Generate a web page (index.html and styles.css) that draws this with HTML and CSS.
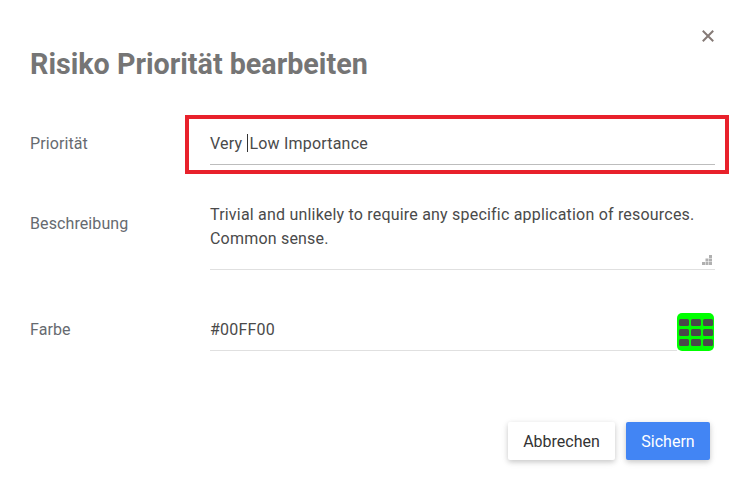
FILE: index.html
```html
<!DOCTYPE html>
<html lang="de">
<head>
<meta charset="utf-8">
<title>Risiko Priorität bearbeiten</title>
<link rel="stylesheet" href="styles.css">
</head>
<body>
<div class="dialog">
  <button class="close" aria-label="Schließen">
    <svg width="12" height="12" viewBox="0 0 12 12"><path d="M1.5 1.5L10.5 10.5M10.5 1.5L1.5 10.5" stroke="#857a76" stroke-width="2" stroke-linecap="square"/></svg>
  </button>
  <h1 class="title">Risiko Priorität bearbeiten</h1>

  <div class="row row-name">
    <div class="label">Priorität</div>
    <div class="field highlighted">
      <div class="input">Very <span class="caret"></span>Low Importance</div>
    </div>
  </div>

  <div class="row row-desc">
    <div class="label label-desc">Beschreibung</div>
    <div class="field">
      <div class="input textarea">Trivial and unlikely to require any specific application of resources. Common sense.
        <svg class="grip" width="10" height="10" viewBox="0 0 10 10"><g fill="#b0b0b0"><rect x="7" y="0" width="3" height="3"/><rect x="3.5" y="3.5" width="3" height="3"/><rect x="7" y="3.5" width="3" height="3"/><rect x="0" y="7" width="3" height="3"/><rect x="3.5" y="7" width="3" height="3"/><rect x="7" y="7" width="3" height="3"/></g></svg>
      </div>
    </div>
  </div>

  <div class="row row-color">
    <div class="label">Farbe</div>
    <div class="field color-field">
      <div class="input">#00FF00</div>
      <button class="swatch" aria-label="Farbe wählen">
        <span></span><span></span><span></span><span></span><span></span><span></span><span></span><span></span><span></span>
      </button>
    </div>
  </div>

  <div class="actions">
    <button class="btn btn-cancel">Abbrechen</button>
    <button class="btn btn-save">Sichern</button>
  </div>
</div>
</body>
</html>
```
FILE: styles.css
```css
* { box-sizing: border-box; }
html, body { margin: 0; padding: 0; background: #fff; }
body {
  font-family: Roboto, "Liberation Sans", Arial, sans-serif;
  width: 745px;
  height: 477px;
  overflow: hidden;
}
.dialog {
  position: relative;
  padding: 48px 30px 0 30px;
}
.close {
  position: absolute;
  top: 30px;
  right: 31px;
  width: 12px;
  height: 12px;
  padding: 0;
  border: 0;
  background: none;
  display: flex;
}
.title {
  margin: 0;
  font-size: 28.7px;
  line-height: 32px;
  font-weight: 700;
  color: #757575;
}
.row {
  display: flex;
  align-items: flex-start;
}
.label {
  width: 180px;
  flex: none;
  font-size: 16px;
  letter-spacing: 0.1px;
  line-height: 24px;
  padding-top: 1px;
  color: #666a70;
}
.field {
  flex: 1;
  position: relative;
}
.input {
  font-size: 16px;
  letter-spacing: 0.2px;
  line-height: 24px;
  color: #4a4a4a;
  border-bottom: 1px solid #bdbdbd;
  padding-top: 1px;
  padding-bottom: 8px;
}
.row-name { margin-top: 51px; }
.highlighted::after {
  content: "";
  position: absolute;
  left: -25px;
  right: -14px;
  top: -16px;
  bottom: -9px;
  border: 4px solid #e8212b;
  pointer-events: none;
}
.caret {
  display: inline-block;
  width: 1px;
  height: 18px;
  background: #333;
  vertical-align: -3px;
  margin-left: 1px;
  margin-right: 1px;
}
.row-desc { margin-top: 37px; }
.label-desc { padding-top: 10px; }
.textarea {
  position: relative;
  padding-bottom: 18px;
  border-bottom-color: #e0e0e0;
}
.grip {
  position: absolute;
  right: 3px;
  bottom: 4px;
}
.row-color { margin-top: 43px; align-items: flex-end; }
.row-color .label { padding-bottom: 9px; }
.color-field {
  display: flex;
  align-items: flex-end;
}
.color-field .input {
  flex: 1;
  border-bottom-color: #e0e0e0;
}
.swatch {
  flex: none;
  width: 37px;
  height: 38px;
  margin-right: 1px;
  border: 0;
  border-radius: 5px;
  background: #00ff00;
  padding: 5px 2px;
  display: grid;
  grid-template-columns: repeat(3, 10px);
  grid-template-rows: repeat(3, 7px);
  gap: 3px 2px;
  justify-content: center;
  align-content: center;
}
.swatch span {
  background: #4a4a4a;
  border-radius: 1.5px;
}
.actions {
  margin-top: 71px;
  display: flex;
  justify-content: flex-end;
  gap: 11px;
  padding-right: 5px;
}
.btn {
  font-family: Roboto, "Liberation Sans", Arial, sans-serif;
  font-size: 16px;
  height: 38px;
  border: 0;
  border-radius: 2px;
  padding: 0;
  box-shadow: 0 2px 5px rgba(0,0,0,0.16), 0 2px 8px rgba(0,0,0,0.08);
}
.btn-cancel {
  background: #fff;
  color: #333;
  width: 107px;
}
.btn-save {
  background: #4285f4;
  color: #fff;
  width: 84px;
}
```
